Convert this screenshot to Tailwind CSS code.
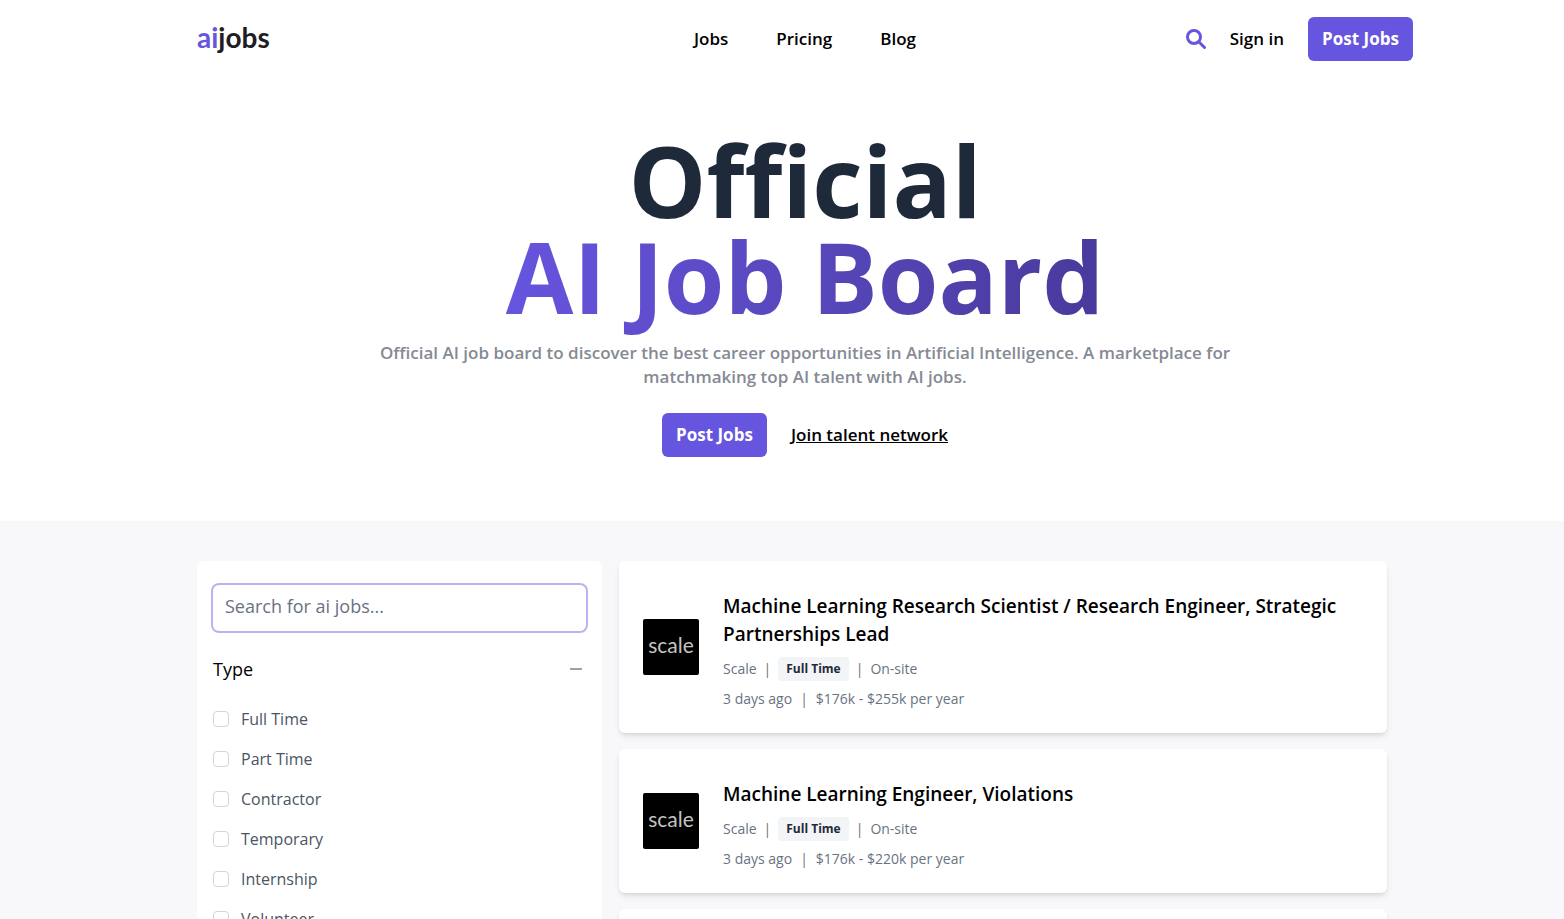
<!DOCTYPE html>
<html lang="en">
<head>
  <meta charset="UTF-8" />
  <meta name="viewport" content="width=device-width, initial-scale=1.0" />
  <title>AI Jobs</title>
  <script src="https://cdn.jsdelivr.net/npm/@tailwindcss/browser@4"></script>
</head>
<body class="bg-white font-['Open_Sans','Noto_Sans',sans-serif] text-black">
  <div class="pl-[46px]">
    <header class="max-w-[1216px] mx-auto h-[78px] grid grid-cols-[1fr_auto_1fr] items-center">
      <a href="#" class="pb-1 font-['Lato',sans-serif] text-[28px] leading-8 font-bold text-[#1f1d24]"><span class="text-[#6655de]">ai</span>jobs</a>
      <nav class="flex gap-12 text-[17px] leading-6 font-semibold">
        <a href="#">Jobs</a>
        <a href="#">Pricing</a>
        <a href="#">Blog</a>
      </nav>
      <div class="flex items-center justify-end gap-6 text-[17px] leading-6 font-semibold">
        <button type="button" aria-label="Search">
          <svg class="w-5 h-5 text-[#6655de]" viewBox="0 0 20 20" fill="none" stroke="currentColor" stroke-width="3">
            <circle cx="8" cy="8" r="6.5" />
            <path d="M12.8 12.8L18.5 18.5" stroke-linecap="round" />
          </svg>
        </button>
        <a href="#">Sign in</a>
        <button type="button" class="h-11 w-[105px] rounded-md bg-[#6655de] text-white font-bold">Post Jobs</button>
      </div>
    </header>

    <section class="max-w-[1216px] mx-auto pt-[54px] pb-16 text-center">
      <h1 class="text-[98px] leading-24 font-bold text-gray-800">
        Official<br />
        <span class="bg-linear-to-r from-[#6655de] to-[#483a9b] bg-clip-text text-transparent">AI Job Board</span>
      </h1>
      <p class="mt-[17px] mx-auto max-w-4xl text-[17px] leading-6 font-semibold text-[#858a94]">Official AI job board to discover the best career opportunities in Artificial Intelligence. A marketplace for matchmaking top AI talent with AI jobs.</p>
      <div class="mt-6 flex items-center justify-center gap-6 text-[17px] leading-6 font-semibold">
        <button type="button" class="h-11 w-[105px] rounded-md bg-[#6655de] text-white font-bold">Post Jobs</button>
        <a href="#" class="underline">Join talent network</a>
      </div>
    </section>
  </div>

  <main class="bg-[#f8f8fb] pl-[46px] py-10">
    <div class="max-w-[1216px] mx-auto pr-[26px] grid grid-cols-[minmax(0,405fr)_minmax(0,768fr)] gap-[17px]">
      <aside class="bg-white rounded-md px-4 py-6">
        <input type="text" aria-label="Search for ai jobs" placeholder="Search for ai jobs..." class="block w-full h-[46px] px-3 pb-1 rounded-md ring-2 ring-[#bbb3f1] outline-none text-[18px] placeholder:text-gray-500" />
        <fieldset class="mt-6" aria-label="Type">
          <button type="button" class="flex w-full items-center justify-between text-[18px] leading-7">
            Type
            <svg class="w-5 h-5 text-gray-400" viewBox="0 0 20 20" fill="none" stroke="currentColor" stroke-width="2"><path d="M4 10h12" /></svg>
          </button>
          <div id="types" class="mt-6 space-y-4 text-[16px] leading-6 text-gray-600"></div>
        </fieldset>
      </aside>

      <div id="jobs" class="space-y-4"></div>
    </div>
  </main>

  <script>
    const types = ["Full Time", "Part Time", "Contractor", "Temporary", "Internship", "Volunteer"];
    const jobs = [
      { title: "Machine Learning Research Scientist / Research Engineer, Strategic Partnerships Lead", salary: "$176k - $255k per year" },
      { title: "Machine Learning Engineer, Violations", salary: "$176k - $220k per year" },
      { title: "Machine Learning Engineer", salary: "$176k - $220k per year" }
    ];

    document.getElementById("types").innerHTML = types.map(type => `
      <label class="flex items-center gap-3">
        <input type="checkbox" class="appearance-none w-4 h-4 rounded border border-gray-300 bg-white checked:bg-[#6655de]" />
        ${type}
      </label>
    `).join("");

    document.getElementById("jobs").innerHTML = jobs.map(job => `
      <article class="flex items-center gap-6 bg-white rounded-md shadow-md px-6">
        <div class="w-14 h-14 shrink-0 rounded-xs bg-black text-[#c4c4c4] font-['Lato',sans-serif] text-[21px] leading-[52px] text-center">scale</div>
        <div class="pt-[31px] pb-6">
          <h2 class="text-[19px] leading-7 font-semibold"><a href="#">${job.title}</a></h2>
          <div class="mt-[9px] flex items-center gap-[7px] text-[14px] leading-6 text-gray-500">
            <span>Scale</span><span>|</span>
            <span class="px-2 rounded bg-gray-100 text-[12px] font-bold text-gray-800">Full Time</span>
            <span>|</span><span>On-site</span>
          </div>
          <div class="mt-2 flex gap-2 text-[14px] leading-5 text-gray-500">
            <span>3 days ago</span><span>|</span><span>${job.salary}</span>
          </div>
        </div>
      </article>
    `).join("");
  </script>
</body>
</html>
